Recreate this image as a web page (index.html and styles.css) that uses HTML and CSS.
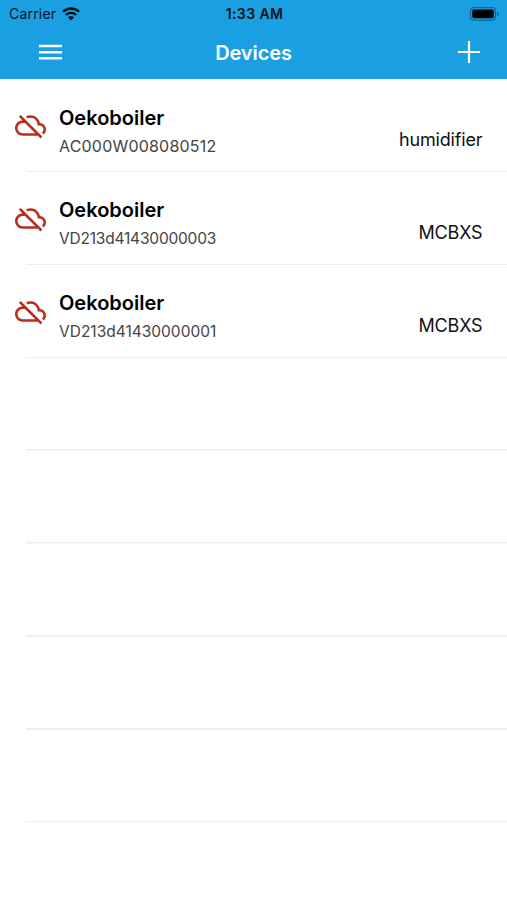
FILE: index.html
```html
<!DOCTYPE HTML>
<html lang="en">
<head>
<meta charset="utf-8">
<meta name="viewport" content="width=device-width, initial-scale=1.0">
<title>Devices</title>
<link rel="stylesheet" href="styles.css">
</head>
<body>
<svg class="defs" width="0" height="0">
	<symbol id="cloud-off" viewBox="0 0 24 24">
		<path d="M24 15c0-2.64-2.05-4.78-4.65-4.96C18.67 6.59 15.64 4 12 4c-1.33 0-2.57.36-3.65.97l1.49 1.49C10.51 6.17 11.23 6 12 6c3.04 0 5.5 2.46 5.5 5.5v.5H19c1.66 0 3 1.34 3 3 0 .99-.48 1.85-1.21 2.4l1.41 1.41c1.09-.92 1.8-2.27 1.8-3.81zM4.41 3.86L3 5.27l2.77 2.77h-.42C2.34 8.36 0 10.91 0 14c0 3.31 2.69 6 6 6h11.73l2 2 1.41-1.41L4.41 3.86zM6 18c-2.21 0-4-1.79-4-4s1.79-4 4-4h1.73l8 8H6z"/>
	</symbol>
</svg>
<header class="header">
	<div class="status">
		<div class="carrier">
			<span>Carrier</span>
			<svg class="wifi" width="18" height="14" viewBox="0 0 18 14">
				<path d="M1 4.7a11.5 11.5 0 0 1 16 0M3.9 7.9a7.4 7.4 0 0 1 10.2 0" fill="none" stroke="#03121b" stroke-width="2.4"/>
				<path d="M9 13.4l-3-3a4.3 4.3 0 0 1 6 0z" fill="#03121b"/>
			</svg>
		</div>
		<div class="time">1:33 AM</div>
		<svg class="battery" width="31" height="14" viewBox="0 0 31 14">
			<rect x="1.4" y=".7" width="25" height="12.4" rx="3.4" fill="none" stroke="#0c6898" stroke-width="1.3"/>
			<rect x="3.2" y="2.6" width="21.6" height="8.7" rx="2" fill="#000"/>
			<path d="M28 4.8c2.6.8 2.6 3.4 0 4.2z" fill="#0c6898"/>
		</svg>
	</div>
	<div class="nav">
		<svg class="menu" width="23" height="17" viewBox="0 0 23 17">
			<path d="M0 2h23M0 8.2h23M0 14.3h23" stroke="#fff" stroke-width="2.6"/>
		</svg>
		<h1>Devices</h1>
		<svg class="add" width="22" height="22" viewBox="0 0 22 22">
			<path d="M0 11h22M11 0v22" stroke="#fff" stroke-width="2.2"/>
		</svg>
	</div>
</header>
<ul class="list">
	<li class="row">
		<svg class="cloud"><use href="#cloud-off"/></svg>
		<div class="info">
			<h2>Oekoboiler</h2>
			<p class="ac">AC000W008080512</p>
		</div>
		<span class="type">humidifier</span>
	</li>
	<li class="row">
		<svg class="cloud"><use href="#cloud-off"/></svg>
		<div class="info">
			<h2>Oekoboiler</h2>
			<p class="vd">VD213d41430000003</p>
		</div>
		<span class="type">MCBXS</span>
	</li>
	<li class="row">
		<svg class="cloud"><use href="#cloud-off"/></svg>
		<div class="info">
			<h2>Oekoboiler</h2>
			<p>VD213d41430000001</p>
		</div>
		<span class="type">MCBXS</span>
	</li>
	<!-- empty rows -->
	<li class="row"></li>
	<li class="row"></li>
	<li class="row"></li>
	<li class="row"></li>
	<li class="row"></li>
</ul>
</body>
</html>
```

FILE: styles.css
```css
body,ul,p,h1,h2{margin: 0;padding: 0;}
body{background: #fff;font-family: Inter, "Liberation Sans", sans-serif;overflow: hidden;}
svg{display: block;flex: none;}
.defs{display: none;}

.header{height: 79px;background: #1b9fe3;}
.status{display: grid;grid-template-columns: 1fr auto 1fr;align-items: center;height: 27px;padding: 0 7px 0 9px;color: #03121b;}
.carrier{display: flex;align-items: center;gap: 6px;font-size: 14px;letter-spacing: .2px;}
.time{font-size: 14px;font-weight: 600;letter-spacing: .4px;}
.battery{justify-self: end;}
.nav{display: grid;grid-template-columns: 1fr auto 1fr;align-items: center;height: 50px;padding: 0 27px;}
.menu{margin-left: 12px;}
.nav h1{padding-top: 1px;color: #fff;font-size: 20px;line-height: 24px;font-weight: 600;letter-spacing: -.1px;}
.add{justify-self: end;}

.list{padding-top: .6px;list-style: none;}
.row{display: flex;box-sizing: border-box;height: 92.85px;padding: 0 24.5px 0 15px;background: linear-gradient(#ececec, #ececec) 26px 100% / 100% 1.5px no-repeat;}
.cloud{width: 31px;height: 31px;margin: 30.6px 13px 0 0;fill: #b92d1c;}
.info{flex: 1;padding-top: 26px;}
.info h2{font-size: 20px;line-height: 25px;font-weight: 600;color: #000;}
.info p{margin-top: 5.6px;font-size: 15.5px;line-height: 20px;color: #444;}
.info .ac{font-size: 16px;letter-spacing: .2px;}
.info .vd{letter-spacing: -.2px;}
.type{margin-top: 49.7px;font-size: 18px;line-height: 22px;letter-spacing: -.15px;color: #111;}
```
